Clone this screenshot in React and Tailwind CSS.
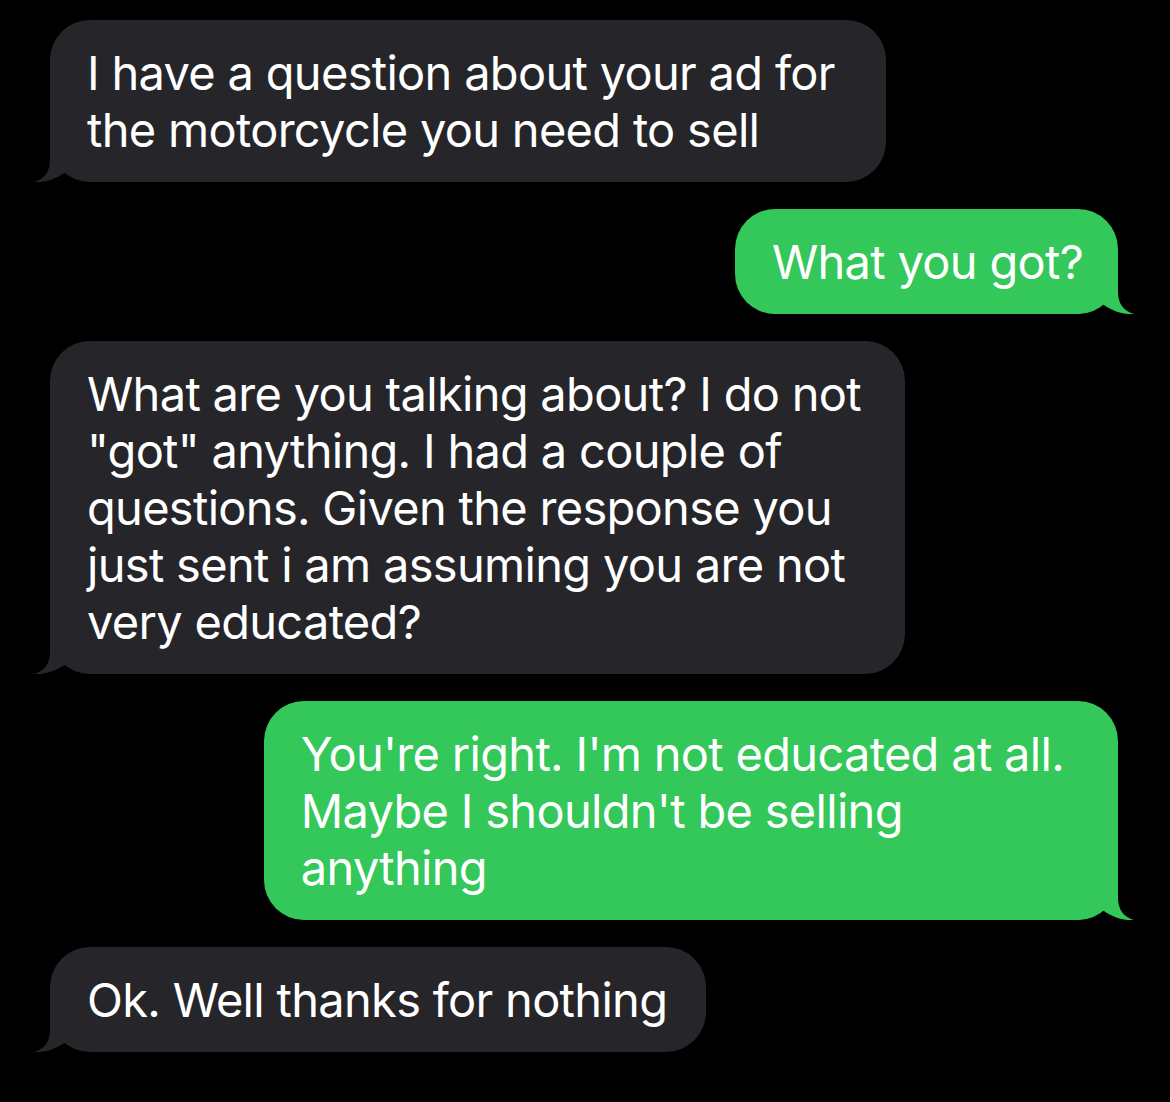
import React from "react";

function Tail({ color, side }) {
  return (
    <svg
      width="60"
      height="40"
      viewBox="0 0 60 40"
      className={
        side === "left"
          ? "absolute bottom-0 left-[-18px]"
          : "absolute bottom-0 right-[-18px] scale-x-[-1]"
      }
    >
      <path
        d="M18,0 L18,18 C18,30 12,37 2,40 C14,41 26,36 35,29 C42,36 52,40 60,40 L60,0 Z"
        fill={color}
      />
    </svg>
  );
}

function Bubble({ side, lines, pr }) {
  const left = side === "left";
  const color = left ? "#26252a" : "#34c759";
  return (
    <div className={left ? "flex justify-start pl-[50px]" : "flex justify-end pr-[52px]"}>
      <div
        className={
          "relative rounded-[40px] pl-[37px] py-[24px] text-white whitespace-nowrap " +
          pr +
          " " +
          (left ? "bg-[#26252a]" : "bg-[#34c759]")
        }
      >
        <Tail color={color} side={side} />
        <div className="relative">
          {lines.map((l, i) => (
            <div key={i}>{l}</div>
          ))}
        </div>
      </div>
    </div>
  );
}

export default function App() {
  return (
    <div
      className="w-[1170px] h-[1102px] bg-black flex flex-col gap-[27px] pt-[20px] text-[47px] leading-[57px] tracking-[-0.7px]"
      style={{ fontFamily: "Inter, 'Liberation Sans', sans-serif" }}
    >
      <Bubble
        side="left"
        pr="pr-[51px]"
        lines={["I have a question about your ad for", "the motorcycle you need to sell"]}
      />
      <Bubble side="right" pr="pr-[35px]" lines={["What you got?"]} />
      <Bubble
        side="left"
        pr="pr-[44px]"
        lines={[
          "What are you talking about? I do not",
          "\"got\" anything. I had a couple of",
          "questions. Given the response you",
          "just sent i am assuming you are not",
          "very educated?",
        ]}
      />
      <Bubble
        side="right"
        pr="pr-[54px]"
        lines={[
          "You're right. I'm not educated at all.",
          "Maybe I shouldn't be selling",
          "anything",
        ]}
      />
      <Bubble side="left" pr="pr-[39px]" lines={["Ok. Well thanks for nothing"]} />
    </div>
  );
}
